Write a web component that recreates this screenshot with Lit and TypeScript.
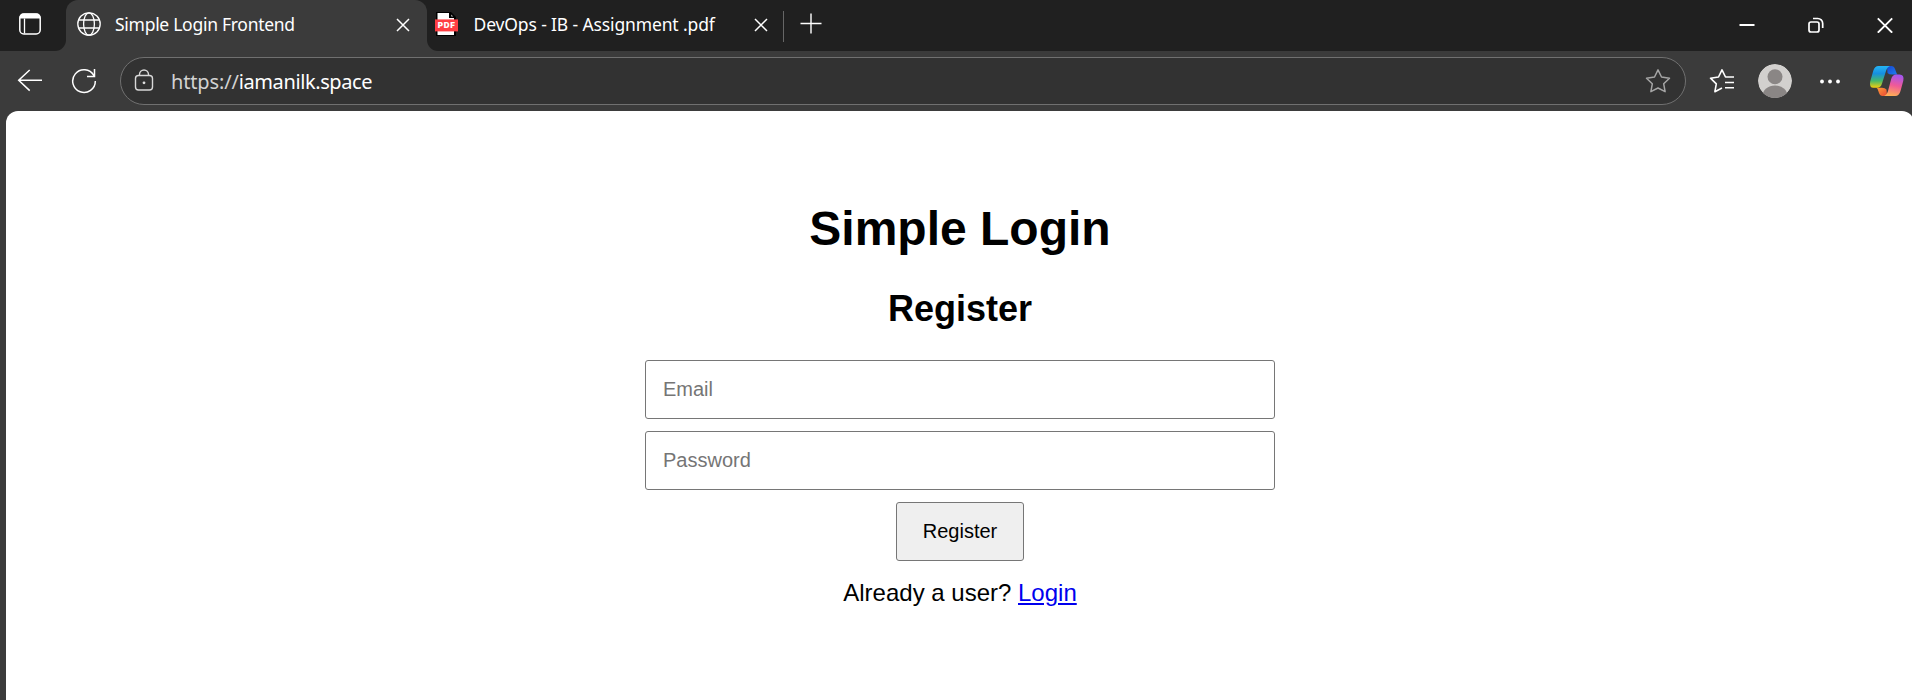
import { LitElement, html, css } from "lit";
import { customElement } from "lit/decorators.js";

@customElement("tab-strip")
class TabStrip extends LitElement {
  static styles = css`
    :host { display: flex; height: 51px; background: #3b3b3b; color: #fff; font-family: "Segoe UI", "Noto Sans", "Open Sans", sans-serif; font-size: 17.5px; }
    svg { display: block; flex: none; fill: none; stroke: #fff; }
    .lead { box-sizing: border-box; width: 66px; background: #202020; border-bottom-right-radius: 11px; padding: 12px 0 0 18px; }
    .shoulder { width: 361px; background: linear-gradient(#202020 50%, #3b3b3b 50%); }
    .tab { display: flex; height: 51px; box-sizing: border-box; }
    .active { background: #3b3b3b; border-radius: 12px 12px 0 0; padding: 12px 17px 0 11px; }
    .rest { flex: 1; display: flex; background: #202020; border-bottom-left-radius: 11px; }
    .idle { width: 356px; padding: 12px 15px 0 7px; }
    .title { flex: 1; line-height: 24px; white-space: pre; margin-left: 14px; }
    .first { letter-spacing: -0.28px; }
    .second { letter-spacing: -0.13px; margin-left: 15.500px; }
    .x { margin-top: 6px; }
    .rule { width: 1px; height: 31px; background: #666; margin-top: 11px; }
    .plus { margin: 13px 0 0 16px; }
    .controls { margin-left: auto; display: flex; gap: 53px; padding: 17px 19px 0 0; }
  `;
  render() {
    return html`
      <div class="lead">
        <svg width="24" height="24" viewBox="0 0 24 24"><rect x="1.8" y="2" width="20.4" height="20" rx="4" stroke-width="1.5"/><path d="M1.500 6.500V6q0-4.500 4-4.500h13q4 0 4 4.500v.5z" fill="#fff" stroke="none"/><path d="M6.500 6.500v15" stroke-width="1.3"/></svg>
      </div>
      <div class="shoulder">
        <div class="tab active">
          <svg width="24" height="24" viewBox="0 0 24 24" stroke-width="1.3"><circle cx="12" cy="12" r="11.2"/><ellipse cx="12" cy="12" rx="5.4" ry="11.2"/><path d="M1.8 8h20.4M1.8 16h20.4"/></svg>
          <span class="title first">Simple Login Frontend</span>
          <svg class="x" width="14" height="14" viewBox="0 0 14 14" stroke-width="1.5"><path d="M1 1l12 12M13 1L1 13"/></svg>
        </div>
      </div>
      <div class="rest">
        <div class="tab idle">
          <svg width="24" height="24" viewBox="0 0 24 24"><path d="M2 0h15l5 5v19H2z" fill="#000" stroke="none"/><path d="M3.500 1H15v5h5v17H3.500z" fill="#fff" stroke="none"/><path d="M17.2 2.4v2h2z" fill="#bbb" stroke="none"/><path d="M1 7.4h23v12H1z" fill="#ff3e43" stroke="none"/><text x="3.800" y="16.4" font-family="Inter, sans-serif" font-weight="900" font-size="8" textLength="17" fill="#fff" stroke="none">PDF</text></svg>
          <span class="title second">DevOps - IB - Assignment .pdf</span>
          <svg class="x" width="14" height="14" viewBox="0 0 14 14" stroke-width="1.5"><path d="M1 1l12 12M13 1L1 13"/></svg>
        </div>
        <div class="rule"></div>
        <svg class="plus" width="22" height="22" viewBox="0 0 22 22" stroke-width="1.4"><path d="M11 0.5v20M.5 10.5h21"/></svg>
        <div class="controls">
          <svg width="16" height="16" viewBox="0 0 16 16" stroke-width="2"><path d="M.5 8h15"/></svg>
          <svg width="16" height="16" viewBox="0 0 16 16" stroke-width="1.7"><rect x="1" y="5" width="10" height="10" rx="2"/><path d="M5 1.500h4.700a5 5 0 0 1 5 5v4.500"/></svg>
          <svg width="16" height="16" viewBox="0 0 16 16" stroke-width="1.9"><path d="M.8 1.300l14.400 14.400M15.200 1.300L.8 15.700"/></svg>
        </div>
      </div>
    `;
  }
}

@customElement("tool-bar")
class ToolBar extends LitElement {
  static styles = css`
    :host { display: flex; height: 60px; box-sizing: border-box; background: #3b3b3b; padding: 6px 0 0 17px; font-family: "Segoe UI", "Noto Sans", "Open Sans", sans-serif; }
    svg { display: block; flex: none; fill: none; stroke: #fff; }
    .back { margin-top: 11px; }
    .reload { margin: 11px 0 0 28px; }
    .address { box-sizing: border-box; width: 1566px; height: 48px; margin-left: 23px; border: 1px solid #707070; border-radius: 24px; background: #323232; display: flex; align-items: center; padding: 0 14px 0 13px; }
    .lock { stroke: #d8d8d8; }
    .url { flex: 1; margin-left: 17px; color: #fff; font-size: 20px; letter-spacing: -0.4px; line-height: 46px; padding-top: 1px; }
    .dim { color: #d2d2d2; letter-spacing: -0.15px; }
    .fav { margin: 11px 0 0 23px; }
    .avatar { margin: 7px 0 0 23px; }
    .dots { margin: 20px 0 0 27px; }
    .copilot { margin: 8px 0 0 28px; }
  `;
  render() {
    return html`
      <svg class="back" width="26" height="24" viewBox="0 0 26 24" stroke-width="1.5"><path d="M25 12.300H1.500M12.700 2L1.700 12.300l11 10.300"/></svg>
      <svg class="reload" width="26" height="26" viewBox="0 0 26 26" stroke-width="1.5"><path d="M22.800 7.500A11.300 11.300 0 1 0 24.300 13M23.500 1v7.500H16"/></svg>
      <div class="address">
        <svg class="lock" width="20" height="24" viewBox="0 0 20 24" stroke-width="1.4"><rect x="1.500" y="6.500" width="17" height="14.500" rx="3"/><path d="M5.500 6.500V5.500a4.500 4.500 0 0 1 9 0v1"/><circle cx="10" cy="13.800" r="1.400" fill="#e0e0e0" stroke="none"/></svg>
        <span class="url"><span class="dim">https://</span>iamanilk.space</span>
        <svg width="26" height="26" viewBox="0 0 26 26"><path d="M13 1.800l3.500 7.200 8 1.200-5.800 5.600 1.400 7.900-7.100-3.700-7.100 3.700 1.400-7.900L1.500 10.200l8-1.200z" stroke="#a5a5a5" stroke-width="1.500" stroke-linejoin="round"/></svg>
      </div>
      <svg class="fav" width="26" height="26" viewBox="0 0 26 26" stroke-width="1.600" stroke-linejoin="round"><path d="M25 9h-8.500L13 1.800 9.500 9l-8 1.200 5.800 5.600-1.400 7.900 7.100-3.700M16 14.500h9M16 19.700h9"/></svg>
      <svg class="avatar" width="34" height="34" viewBox="0 0 34 34"><defs><clipPath id="disc"><circle cx="17" cy="17" r="17"/></clipPath></defs><g clip-path="url(#disc)" stroke="none"><circle cx="17" cy="17" r="17" fill="#d2d0ce"/><circle cx="17" cy="12.700" r="7.500" fill="#8a8685"/><ellipse cx="17" cy="32" rx="12.500" ry="10.500" fill="#8a8685"/></g></svg>
      <svg class="dots" width="22" height="8" viewBox="0 0 22 8"><g fill="#fff" stroke="none"><circle cx="3" cy="4.500" r="1.900"/><circle cx="11" cy="4.500" r="1.900"/><circle cx="19" cy="4.500" r="1.900"/></g></svg>
      <svg class="copilot" width="36" height="34" viewBox="0 0 36 34">
        <defs>
          <linearGradient id="a" x1="0" y1="0" x2="0" y2="1"><stop offset="0" stop-color="#25b5f5"/><stop offset=".35" stop-color="#168fe0"/><stop offset=".68" stop-color="#46b86a"/><stop offset="1" stop-color="#f5ce0b"/></linearGradient>
          <linearGradient id="b" x1=".6" y1="0" x2=".4" y2="1"><stop offset="0" stop-color="#a355f0"/><stop offset=".5" stop-color="#f05a98"/><stop offset="1" stop-color="#ffaf55"/></linearGradient>
          <linearGradient id="c" x1="0" y1="0" x2="1" y2="1"><stop offset="0" stop-color="#1747d1"/><stop offset="1" stop-color="#1f80f0"/></linearGradient>
          <linearGradient id="d" x1="0" y1="0" x2="1" y2="1"><stop offset="0" stop-color="#ffa038"/><stop offset="1" stop-color="#e94835"/></linearGradient>
        </defs>
        <g stroke="none">
          <path d="M18 1h4.500q2.500 0 3.500 3l1.500 4q.5 1.500 1.500 1.500h-6q-3 0-4.500-1.500z" fill="url(#c)"/>
          <path d="M7 22.800h6q3 0 4.500 1.700L18 31h-4.500q-2.500 0-3.500-3l-1.200-3.500Q8.200 22.800 7 22.800z" fill="url(#d)"/>
          <path d="M9.500 1H21q-2.800 1-4 5l-4 12.500q-1.300 4.300-5 4.300H4.500Q0 22.800 1.200 16.500L4.200 6q1.500-5 5.300-5z" fill="url(#a)"/>
          <path d="M27 9.500h3.500q5 0 3.800 6.300L31.500 26q-1.400 5-5.200 5H15q2.800-1 4-5l3.200-12q1.300-4.500 4.800-4.500z" fill="url(#b)"/>
        </g>
      </svg>
    `;
  }
}

@customElement("register-page")
class RegisterPage extends LitElement {
  static styles = css`
    :host { display: flex; flex-direction: column; align-items: center; box-sizing: border-box; width: 1908px; height: 589px; margin-left: 6px; padding-top: 90px; background: #fff; border-radius: 12px 12px 0 0; color: #000; font: 24px "Liberation Sans", Arial, sans-serif; }
    h1, h2, p { margin: 0; }
    h1 { font-size: 48px; line-height: 55px; }
    h2 { font-size: 36px; line-height: 41px; margin-top: 32px; }
    form { display: flex; flex-direction: column; align-items: center; gap: 12px; margin-top: 31px; }
    input, button { box-sizing: border-box; height: 59px; border: 1px solid #767676; border-radius: 3px; font: 20px "Liberation Sans", Arial, sans-serif; color: #000; }
    input { width: 630px; padding: 0 17px; background: #fff; }
    input::placeholder { color: #757575; }
    button { width: 128px; padding: 0; background: #efefef; }
    p { line-height: 28px; margin-top: 18px; }
    a { color: #0000ee; text-decoration: underline; }
  `;
  render() {
    return html`
      <h1>Simple Login</h1>
      <h2>Register</h2>
      <form>
        <input type="email" placeholder="Email" />
        <input type="password" placeholder="Password" />
        <button type="button">Register</button>
      </form>
      <p>Already a user? <a href="#">Login</a></p>
    `;
  }
}

@customElement("app-root")
class AppRoot extends LitElement {
  static styles = css`
    :host { display: block; width: 100%; height: 700px; overflow: hidden; background: #3b3b3b; }
  `;
  render() {
    return html`<tab-strip></tab-strip><tool-bar></tool-bar><register-page></register-page>`;
  }
}
